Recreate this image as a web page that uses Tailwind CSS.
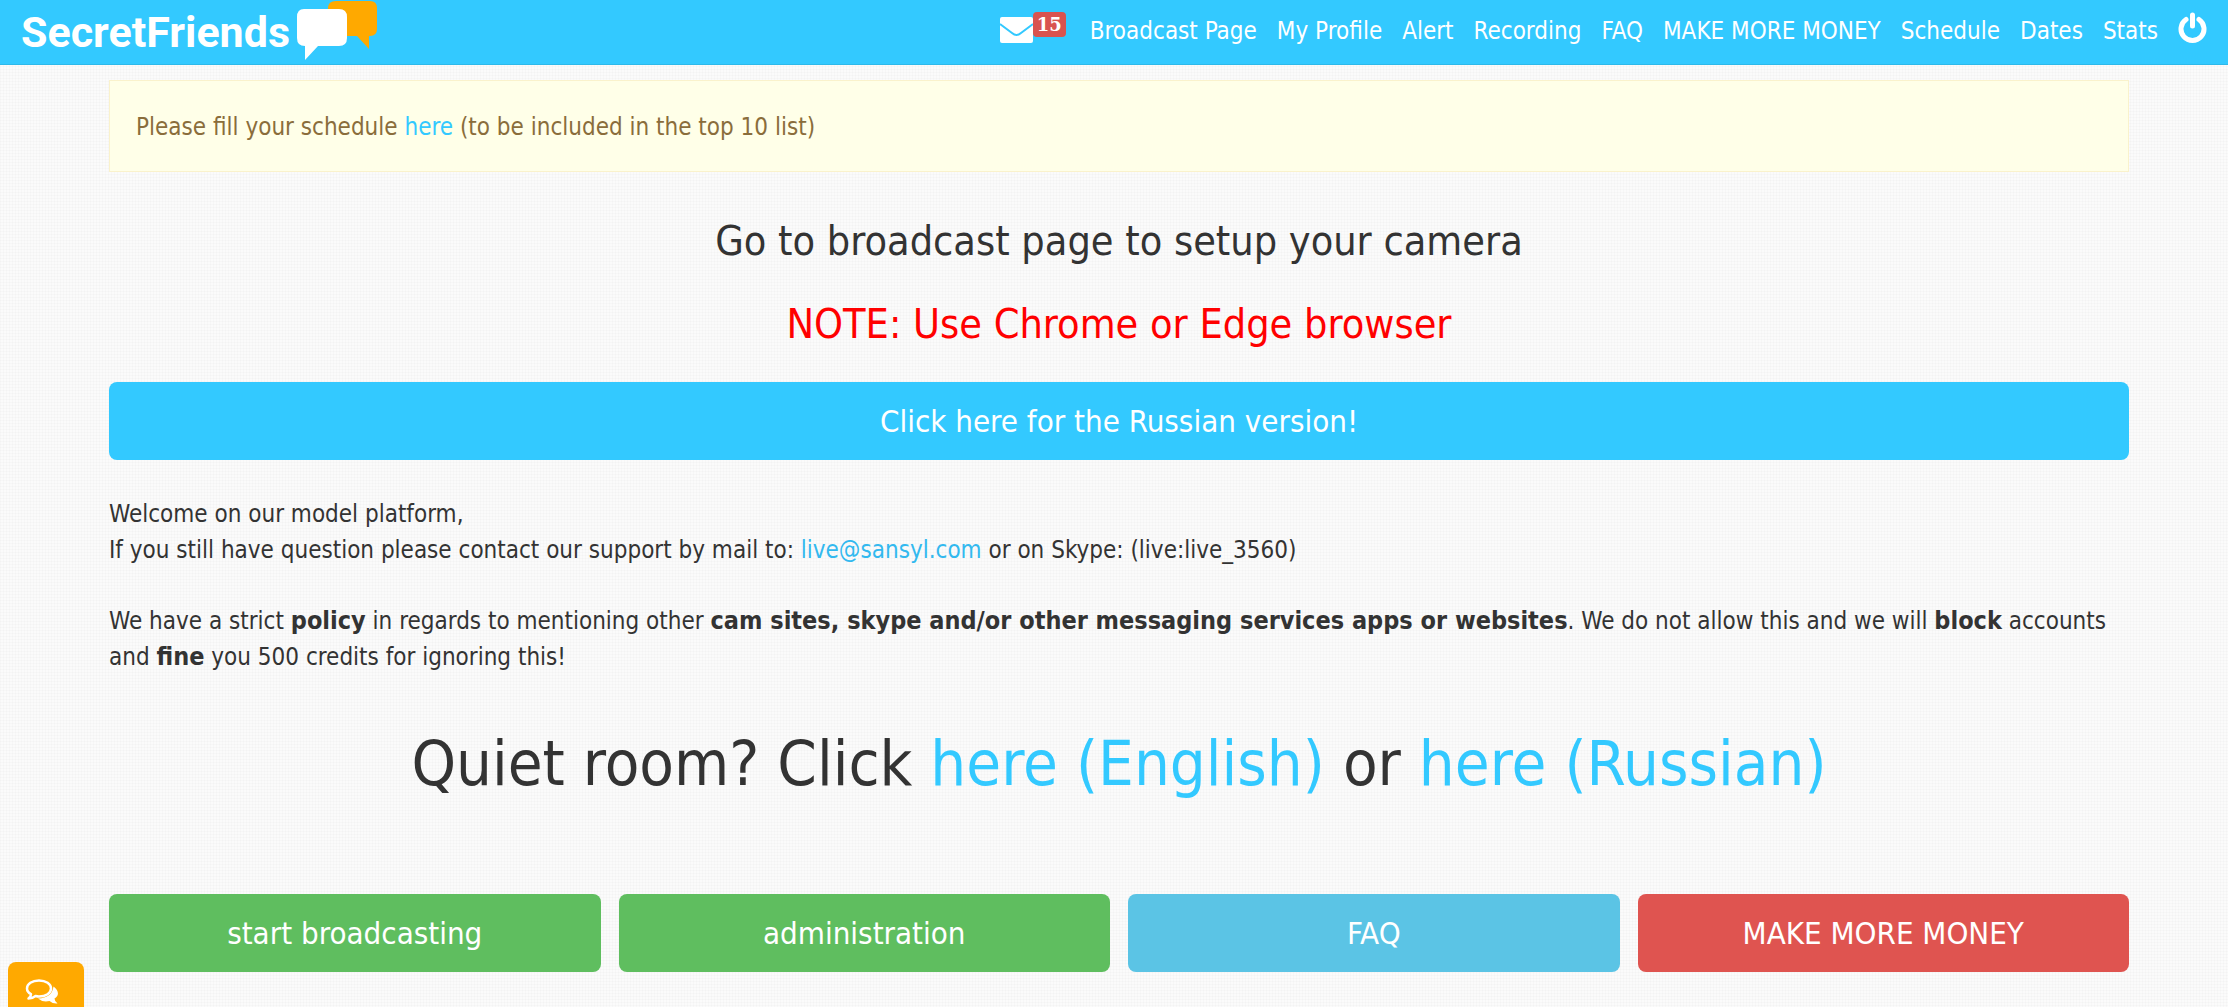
<!DOCTYPE html>
<html lang="en">
  <head>
    <meta charset="UTF-8" />
    <meta name="viewport" content="width=device-width, initial-scale=1.0" />
    <script src="https://cdn.jsdelivr.net/npm/@tailwindcss/browser@4"></script>
    <title>SecretFriends</title>
  </head>
  <body
    class="min-h-screen bg-[#fbfbfb] bg-[linear-gradient(#00000004_1px,transparent_1px),linear-gradient(90deg,#00000004_1px,transparent_1px)] bg-[size:3px_3px] font-['DejaVu_Sans_Condensed','DejaVu_Sans',sans-serif] text-[24px] leading-9 text-[#333333]"
  >
    <header
      class="flex h-[65px] items-center justify-between border-b border-[#2db9ea] bg-[#33c9ff] px-[21px] text-white"
    >
      <a href="#" class="flex items-center gap-[6px]">
        <span class="font-[Roboto,sans-serif] text-[43px] leading-[60px] font-bold"
          >SecretFriends</span
        >
        <svg class="mb-[2px] h-[62px] w-[82px]" viewBox="0 0 82 62" aria-hidden="true">
          <path
            fill="#ffa900"
            d="M40 1H74Q81 1 81 8V29Q81 36 74 36H73V49L61 36H32V8Q32 1 40 1Z"
          />
          <path
            fill="#fff"
            d="M8 9H43Q51 9 51 17V38Q51 46 43 46H22L9 60V46Q1 46 1 38V17Q1 9 8 9Z"
          />
        </svg>
      </a>

      <nav class="flex items-center gap-5 pb-[2px]">
        <a href="#" class="mr-1 mb-2 flex items-end" aria-label="15 messages">
          <svg class="h-[26px] w-[33px]" viewBox="0 0 33 26" aria-hidden="true">
            <rect width="33" height="26" rx="2" fill="#fff" />
            <path
              d="M0 7L12 16Q16.500 20 21 16L33 7"
              fill="none"
              stroke="#33c9ff"
              stroke-width="2"
            />
          </svg>
          <span
            class="mb-[6px] rounded bg-[#d9534f] px-1 font-['DejaVu_Serif',serif] text-[18px] leading-[25px] font-bold"
            >15</span
          >
        </a>
        <a href="#">Broadcast Page</a>
        <a href="#">My Profile</a>
        <a href="#">Alert</a>
        <a href="#">Recording</a>
        <a href="#">FAQ</a>
        <a href="#">MAKE MORE MONEY</a>
        <a href="#">Schedule</a>
        <a href="#">Dates</a>
        <a href="#">Stats</a>
        <a href="#" class="mb-2" aria-label="Log out">
          <svg class="h-[31px] w-[29px]" viewBox="0 0 29 31" aria-hidden="true">
            <path
              d="M8 7.500A11.500 11.500 0 1 0 21 7.500M14.500 3V14"
              fill="none"
              stroke="#fff"
              stroke-width="5"
              stroke-linecap="round"
            />
          </svg>
        </a>
      </nav>
    </header>

    <main class="pt-[15px] pr-[99px] pl-[109px]">
      <div
        class="border border-[#faf2cc] bg-[#ffffe8] px-[26px] pt-7 pb-[26px] text-[#8a6d3b]"
      >
        Please fill your schedule <a href="#" class="text-[#33c9ff]">here</a> (to
        be included in the top 10 list)
      </div>

      <h2 class="mt-[47px] text-center text-[41px] leading-[44px]">
        Go to broadcast page to setup your camera
      </h2>
      <h2 class="mt-[39px] text-center text-[41px] leading-[44px] text-[#ff0000]">
        NOTE: Use Chrome or Edge browser
      </h2>

      <button
        type="button"
        class="mt-9 h-[78px] w-full rounded-lg bg-[#33c9ff] text-[31px] text-white"
      >
        Click here for the Russian version!
      </button>

      <p class="mt-9">
        Welcome on our model platform,<br />
        If you still have question please contact our support by mail to:
        <a href="#" class="text-[#33b9ef]">live@sansyl.com</a> or on Skype:
        (live:live_3560)
      </p>
      <p class="mt-[35px]">
        We have a strict <b class="text-[25px]">policy</b> in regards to
        mentioning other
        <b class="text-[25px]"
          >cam sites, skype and/or other messaging services apps or websites</b
        >. We do not allow this and we will <b class="text-[25px]">block</b>
        accounts and <b class="text-[25px]">fine</b> you 500 credits for ignoring
        this!
      </p>

      <h1 class="mt-[55px] text-center text-[63px] leading-[68px]">
        Quiet room? Click
        <a href="#" class="text-[#33c9ff]">here (English)</a> or
        <a href="#" class="text-[#33c9ff]">here (Russian)</a>
      </h1>

      <div class="mt-24 grid grid-cols-4 gap-[18px] text-[31px] text-white">
        <button type="button" class="h-[78px] rounded-lg bg-[#5fbe5f]">
          start broadcasting
        </button>
        <button type="button" class="h-[78px] rounded-lg bg-[#5fbe5f]">
          administration
        </button>
        <button type="button" class="h-[78px] rounded-lg bg-[#5bc4e5]">FAQ</button>
        <button type="button" class="h-[78px] rounded-lg bg-[#df5450]">
          MAKE MORE MONEY
        </button>
      </div>
    </main>

    <!-- chat tab -->
    <button
      type="button"
      aria-label="Open chat"
      class="fixed bottom-0 left-2 flex h-[45px] w-[76px] justify-center rounded-t-lg bg-[#ffa900] pt-4 pr-2"
    >
      <svg class="h-[27px] w-[34px]" viewBox="0 0 34 27" aria-hidden="true">
        <path
          fill="#fff"
          d="M28.500 8.500C34.500 13 34 18 29.500 20.500Q29.500 23 32.500 25.500Q28 26 24.500 23Q17.500 24.500 13 20.500Q27 20 28.500 8.500Z"
        />
        <path
          d="M14 2.500C21 2.500 26 6 26 10.500S21 18.500 14 18.500Q12.500 18.500 10.500 18Q7.500 20.500 3.500 20.500Q6 18.500 6 16.200Q2 14 2 10.500C2 6 7 2.500 14 2.500Z"
          fill="#ffa900"
          stroke="#fff"
          stroke-width="2.500"
          stroke-linejoin="round"
        />
      </svg>
    </button>
  </body>
</html>
